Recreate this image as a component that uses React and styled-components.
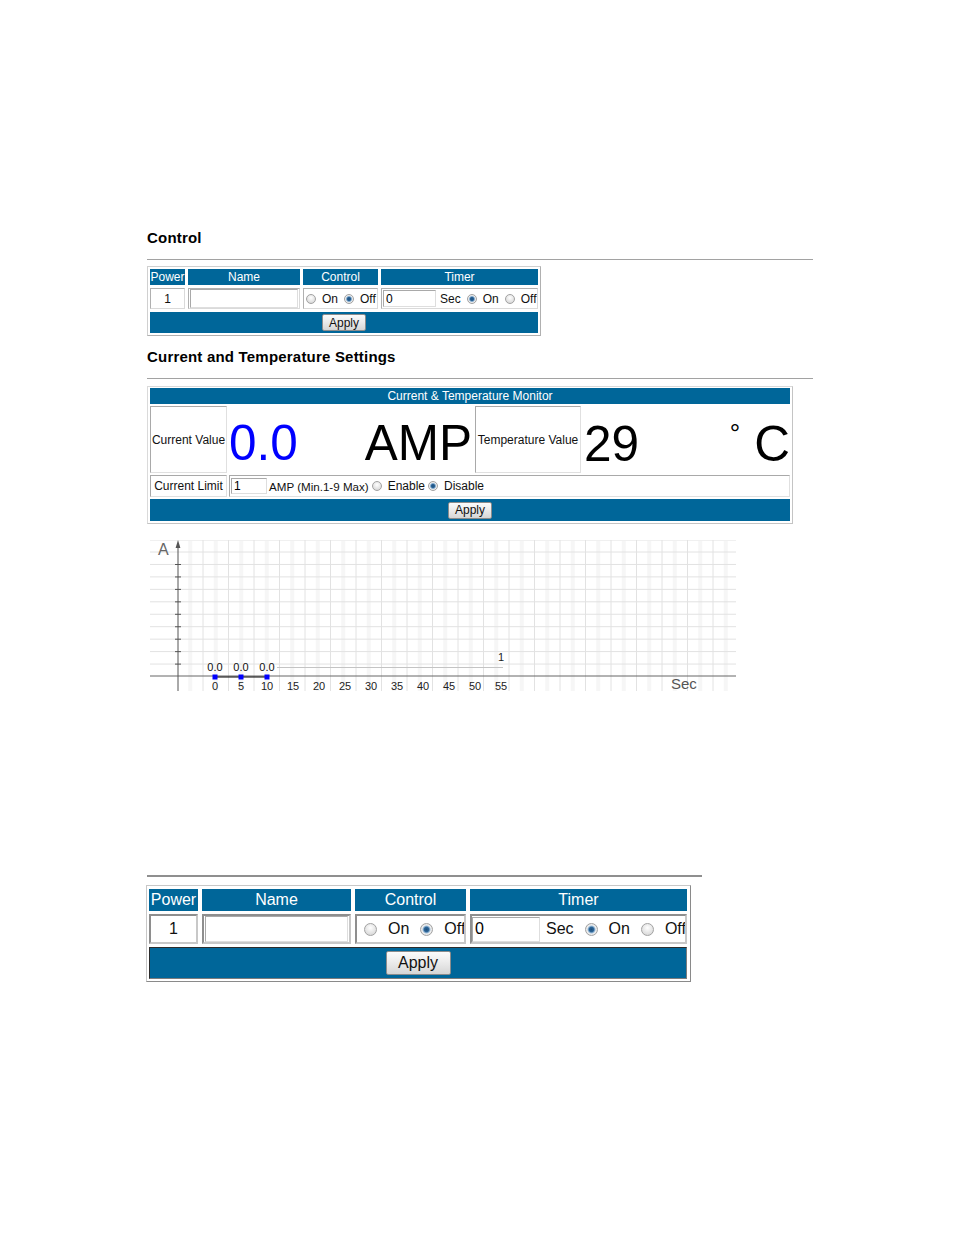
import React from "react";
import styled, { createGlobalStyle } from "styled-components";

const BLUE = "#006699";
const FONT = `"Liberation Sans", Arial, Helvetica, sans-serif`;

const GlobalStyle = createGlobalStyle`
  html, body { margin: 0; padding: 0; background: #ffffff; }
  body { font-family: ${FONT}; color: #000; }
  *, *::before, *::after { box-sizing: border-box; }
`;

const Page = styled.main`
  width: 954px;
  height: 1235px;
  padding: 229px 0 0 147px;
  overflow: hidden;
`;

const SectionTitle = styled.h2`
  margin: ${(p) => p.$mt}px 0 0;
  font-size: 15px;
  line-height: 18px;
  font-weight: 700;
  letter-spacing: 0.2px;
`;

const Rule = styled.hr`
  margin: ${(p) => p.$mt}px 0 0;
  width: ${(p) => p.$w}px;
  height: ${(p) => p.$h}px;
  border: none;
  background: ${(p) => p.$c};
`;

/* ---------- control table (two sizes) ---------- */

const SM = {
  font: 12,
  cols: "35px 112px 75px 157px",
  colGap: 3,
  rows: "16px 21px 21px",
  frame: "#d0d0d0 #b0b0b0 #b0b0b0 #d0d0d0",
  pad: "2px",
  ml: 0,
  mt: 6,
  cell: 1,
  cellColor: "#b0b0b0 #dadada #dadada #b0b0b0",
  radio: 10,
  gap: 6,
  ctrlPad: 2,
  timerPad: 1,
  namePad: 1,
  inW: 53,
  inH: 17,
  secShift: -2,
  btnW: 44,
  btnH: 17,
  applyBorder: "border: none;",
};

const LG = {
  font: 16,
  cols: "49px 149px 111px 217px",
  colGap: 4,
  rows: "22px 30px 32px",
  frame: "#c8c8c8 #8a8a8a #8a8a8a #c8c8c8",
  pad: "3px 3px 2px 2px",
  ml: -1,
  mt: 8,
  cell: 2,
  cellColor: "#8e8e8e #c8c8c8 #c8c8c8 #8e8e8e",
  radio: 13,
  gap: 11,
  ctrlPad: 7,
  timerPad: 0,
  namePad: 1,
  inW: 68,
  inH: 25,
  secShift: -5,
  btnW: 65,
  btnH: 24,
  applyBorder: "border: 1px solid; border-color: #2c2c2c #7c7c7c #7c7c7c #2c2c2c;",
};

const CtlFrame = styled.div`
  width: fit-content;
  margin: ${(p) => p.$s.mt}px 0 0 ${(p) => p.$s.ml}px;
  border: 1px solid;
  border-color: ${(p) => p.$s.frame};
  padding: ${(p) => p.$s.pad};
  background: #fff;
`;

const CtlGrid = styled.div`
  display: grid;
  grid-template-columns: ${(p) => p.$s.cols};
  grid-template-rows: ${(p) => p.$s.rows};
  gap: 3px ${(p) => p.$s.colGap}px;
  font-size: ${(p) => p.$s.font}px;
`;

const HeadCell = styled.div`
  background: ${BLUE};
  color: #fff;
  display: flex;
  align-items: center;
  justify-content: center;
  white-space: nowrap;
  overflow: hidden;
  line-height: 1;
`;

const BodyCell = styled.div`
  border: ${(p) => p.$s.cell}px solid;
  border-color: ${(p) => p.$s.cellColor};
  display: flex;
  align-items: center;
  justify-content: ${(p) => (p.$center ? "center" : "flex-start")};
  gap: ${(p) => p.$s.gap}px;
  padding: 0 0 0 ${(p) => p.$padL || 0}px;
  overflow: hidden;
  white-space: nowrap;
  background: #fff;
  color: #111;
`;

const NameBox = styled.input`
  width: calc(100% - ${(p) => p.$pad * 2}px);
  margin: 0 ${(p) => p.$pad}px;
  height: 100%;
  border: 1px solid;
  border-color: #a9a9a9 #dedede #dedede #a9a9a9;
  padding: 0 3px;
  font: inherit;
  background: #fff;
  outline: none;
`;

const SmallBox = styled.input`
  width: ${(p) => p.$w}px;
  height: ${(p) => p.$h}px;
  flex: none;
  border: 1px solid;
  border-color: #a9a9a9 #dedede #dedede #a9a9a9;
  padding: 0 2px;
  font: inherit;
  font-size: ${(p) => p.$f || "inherit"};
  color: #000;
  background: #fff;
  outline: none;
`;

const Shifted = styled.span`
  margin-left: ${(p) => p.$shift}px;
`;

const Radio = styled.span`
  flex: none;
  display: inline-block;
  width: ${(p) => p.$d}px;
  height: ${(p) => p.$d}px;
  margin-left: ${(p) => p.$ml || 0}px;
  border-radius: 50%;
  border: 1px solid #a2a2a2;
  background: ${(p) =>
    p.$on
      ? `radial-gradient(circle, #1d4e7c 0, #2c6496 ${p.$d * 0.17}px, #8fb3d3 ${p.$d * 0.26}px, #efefef ${p.$d * 0.34}px, #d2d2d2 100%)`
      : `radial-gradient(circle at 50% 35%, #ffffff 0, #eeeeee 35%, #cfcfcf 100%)`};
`;

const ApplyBar = styled.div`
  grid-column: 1 / -1;
  background: ${BLUE};
  display: flex;
  align-items: center;
  justify-content: center;
  ${(p) => p.$s.applyBorder}
`;

const Button = styled.button`
  width: ${(p) => p.$w}px;
  height: ${(p) => p.$h}px;
  padding: 0;
  margin: 0;
  font-family: ${FONT};
  font-size: ${(p) => p.$f}px;
  line-height: 1;
  color: #111;
  border: 1px solid #8c8c8c;
  border-radius: 2px;
  background: linear-gradient(#fbfbfb, #ececec 45%, #d6d6d6);
`;

function ControlTable({ s }) {
  return (
    <CtlFrame $s={s}>
      <CtlGrid $s={s}>
        <HeadCell>Power</HeadCell>
        <HeadCell>Name</HeadCell>
        <HeadCell>Control</HeadCell>
        <HeadCell>Timer</HeadCell>

        <BodyCell $s={s} $center>1</BodyCell>
        <BodyCell $s={s}>
          <NameBox $pad={s.namePad} readOnly value="" />
        </BodyCell>
        <BodyCell $s={s} $padL={s.ctrlPad}>
          <Radio $d={s.radio} />
          <span>On</span>
          <Radio $d={s.radio} $on />
          <span>Off</span>
        </BodyCell>
        <BodyCell $s={s} $padL={s.timerPad}>
          <SmallBox $w={s.inW} $h={s.inH} readOnly value="0" />
          <Shifted $shift={s.secShift}>Sec</Shifted>
          <Radio $d={s.radio} $on />
          <span>On</span>
          <Radio $d={s.radio} />
          <span>Off</span>
        </BodyCell>

        <ApplyBar $s={s}>
          <Button $w={s.btnW} $h={s.btnH} $f={s.font}>
            Apply
          </Button>
        </ApplyBar>
      </CtlGrid>
    </CtlFrame>
  );
}

/* ---------- monitor table ---------- */

const MonFrame = styled.div`
  width: 646px;
  margin-top: 7px;
  border: 1px solid;
  border-color: #dadada #c4c4c4 #c4c4c4 #dadada;
  padding: 1px 2px 2px 2px;
  display: flex;
  flex-direction: column;
  gap: 2px;
`;

const MonHead = styled.div`
  height: 16px;
  background: ${BLUE};
  color: #fff;
  font-size: 12px;
  line-height: 16px;
  text-align: center;
`;

const MonRow = styled.div`
  display: flex;
  gap: 2px;
  height: ${(p) => p.$h}px;
`;

const LabelBox = styled.div`
  width: ${(p) => p.$w}px;
  flex: none;
  border: 1px solid;
  border-color: #a9a9a9 #e0e0e0 #e0e0e0 #a9a9a9;
  display: flex;
  align-items: center;
  justify-content: center;
  font-size: ${(p) => p.$f}px;
  white-space: nowrap;
  color: #111;
`;

const Reading = styled.div`
  width: ${(p) => (p.$w ? `${p.$w}px` : "auto")};
  flex: ${(p) => (p.$w ? "none" : "1")};
  display: flex;
  align-items: flex-end;
  justify-content: space-between;
  padding: 0 ${(p) => p.$pr}px ${(p) => p.$pb}px ${(p) => p.$pl}px;
  font-size: 49.5px;
  line-height: 48px;
`;

const BigText = styled.span`
  color: ${(p) => p.$c || "#000"};
  margin-right: ${(p) => (p.$push ? "auto" : "0")};
`;

const Degree = styled.span`
  align-self: flex-start;
  margin: 14px 14px 0 0;
  font-size: 26px;
  line-height: 26px;
`;

const LimitCell = styled.div`
  flex: 1;
  border: 1px solid;
  border-color: #a9a9a9 #e0e0e0 #e0e0e0 #a9a9a9;
  display: flex;
  align-items: center;
  padding-left: 1px;
  font-size: 12px;
  white-space: nowrap;
  color: #111;
`;

const Note = styled.span`
  margin-left: ${(p) => p.$ml}px;
  font-size: ${(p) => p.$f || 12}px;
`;

const MonApply = styled.div`
  height: 22px;
  background: ${BLUE};
  display: flex;
  align-items: center;
  justify-content: center;
`;

function MonitorTable() {
  return (
    <MonFrame>
      <MonHead>Current &amp; Temperature Monitor</MonHead>
      <MonRow $h={67}>
        <LabelBox $w={77} $f={12}>Current Value</LabelBox>
        <Reading $w={244} $pl={0} $pr={1} $pb={6}>
          <BigText $c="#0000ff">0.0</BigText>
          <BigText>AMP</BigText>
        </Reading>
        <LabelBox $w={106} $f={12}>Temperature Value</LabelBox>
        <Reading $pl={1} $pr={0} $pb={5}>
          <BigText $push>29</BigText>
          <Degree>°</Degree>
          <BigText>C</BigText>
        </Reading>
      </MonRow>
      <MonRow $h={22}>
        <LabelBox $w={77} $f={12}>Current Limit</LabelBox>
        <LimitCell>
          <SmallBox $w={36} $h={16} readOnly value="1" />
          <Note $ml={2} $f={11.6}>AMP (Min.1-9 Max)</Note>
          <Radio $d={10} $ml={3} />
          <Note $ml={6}>Enable</Note>
          <Radio $d={10} $ml={3} $on />
          <Note $ml={6}>Disable</Note>
        </LimitCell>
      </MonRow>
      <MonApply>
        <Button $w={44} $h={17} $f={12}>
          Apply
        </Button>
      </MonApply>
    </MonFrame>
  );
}

/* ---------- chart ---------- */

const ChartBox = styled.div`
  margin-top: 16px;
  margin-left: 3px;
  width: 586px;
  height: 151px;
  overflow: hidden;
`;

function Chart() {
  const W = 586;
  const H = 151;
  const hLines = Array.from({ length: 10 }, (_, i) => 12 + i * 12.45);
  const vLines = Array.from({ length: 21 }, (_, i) => 53 + i * 25.5);
  const stripes = [40.25, ...vLines.map((x) => x + 12.75)];
  const ticks = Array.from({ length: 9 }, (_, i) => 24.5 + i * 12.45);
  const xLabels = Array.from({ length: 12 }, (_, i) => ({ x: 65 + i * 26, t: String(i * 5) }));
  const pts = [65, 91, 117];
  const font = FONT;
  return (
    <ChartBox>
      <svg width={W} height={H} viewBox={`0 0 ${W} ${H}`}>
        <rect x="0" y="0" width={W} height={H} fill="#fff" />
        {stripes.map((x) => (
          <rect key={`s${x}`} x={x - 2} y="0" width="4" height={H} fill="#f6f6f6" />
        ))}
        <line x1="0" x2={W} y1="0.5" y2="0.5" stroke="#f0f0f0" />
        {hLines.map((y) => (
          <line key={`h${y}`} x1="0" x2={W} y1={y} y2={y} stroke="#e2e2e2" strokeWidth="1" />
        ))}
        {vLines.map((x) => (
          <line key={`v${x}`} x1={x} x2={x} y1="0" y2={H} stroke="#e2e2e2" strokeWidth="1" />
        ))}
        {/* axes */}
        <line x1="0" x2={W} y1="136" y2="136" stroke="#666" strokeWidth="1" />
        <line x1="28" x2="28" y1="4" y2={H} stroke="#555" strokeWidth="1" />
        <polygon points="28,0 25.6,8 30.4,8" fill="#555" />
        {ticks.map((y) => (
          <line key={`t${y}`} x1="25" x2="31" y1={y} y2={y} stroke="#555" strokeWidth="1" />
        ))}
        <text x="8" y="15" fontFamily={font} fontSize="16" fill="#666">
          A
        </text>
        {/* faint series line */}
        <line x1="127" x2="353" y1="127.5" y2="127.5" stroke="#c4c4c4" strokeWidth="1" />
        <text x="351" y="121" fontFamily={font} fontSize="11" fill="#222" textAnchor="middle">
          1
        </text>
        {/* data */}
        <line x1="65" x2="117" y1="137" y2="137" stroke="#000" strokeWidth="1.2" />
        {pts.map((x) => (
          <rect key={`p${x}`} x={x - 2.5} y="134.5" width="5" height="5" fill="#0000ff" />
        ))}
        {pts.map((x) => (
          <text key={`l${x}`} x={x} y="131" fontFamily={font} fontSize="11" fill="#111" textAnchor="middle">
            0.0
          </text>
        ))}
        {xLabels.map((l) => (
          <text key={`x${l.t}`} x={l.x} y="150" fontFamily={font} fontSize="11" fill="#222" textAnchor="middle">
            {l.t}
          </text>
        ))}
        <text x="521" y="149" fontFamily={font} fontSize="15" fill="#555">
          Sec
        </text>
      </svg>
    </ChartBox>
  );
}

export default function App() {
  return (
    <>
      <GlobalStyle />
      <Page>
        <SectionTitle $mt={0}>Control</SectionTitle>
        <Rule $mt={12} $w={666} $h={1} $c="#a2a2a2" />
        <ControlTable s={SM} />

        <SectionTitle $mt={12}>Current and Temperature Settings</SectionTitle>
        <Rule $mt={12} $w={666} $h={1} $c="#a2a2a2" />
        <MonitorTable />
        <Chart />

        <Rule $mt={184} $w={555} $h={2} $c="#8f8f8f" />
        <ControlTable s={LG} />
      </Page>
    </>
  );
}
